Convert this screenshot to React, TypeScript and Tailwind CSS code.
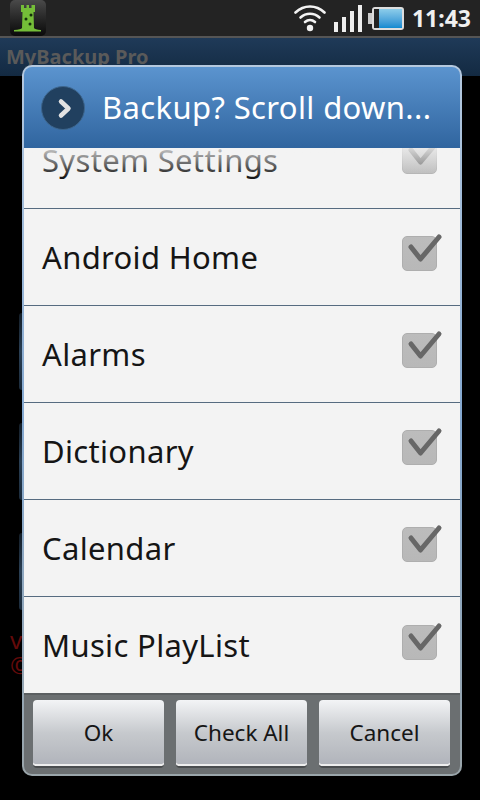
const items = ["System Settings", "Android Home", "Alarms", "Dictionary", "Calendar", "Music PlayList"];

function Check() {
  return (
    <div className="relative -mt-[7px] w-[35px] h-[35px] rounded-[5px] border border-[#aeaeae] bg-gradient-to-b from-[#bcbcbc] to-[#b8b8b8]">
      <svg className="absolute -left-[1px] -top-[4px]" width="42" height="38" viewBox="0 0 42 38">
        <path d="M9 14 L18.5 26 L37 4" fill="none" stroke="#676767" strokeWidth="5" strokeLinecap="round" strokeLinejoin="round" />
      </svg>
    </div>
  );
}

function Btn({ label }: { label: string }) {
  return (
    <button className="w-[131px] h-[68px] rounded-[4px] border-b-2 border-b-[#4a4d4f] bg-gradient-to-b from-[#f3f4f6] via-[#c6c9cd] to-[#b0b3ba] shadow-[inset_0_-2px_0_#eeeeee] text-[22.5px] text-[#161616] flex items-center justify-center">
      {label}
    </button>
  );
}

function Strip({ top }: { top: string }) {
  return <div className={`absolute left-[19px] w-[3px] h-[77px] rounded-l-[3px] bg-gradient-to-b from-[#141e28] via-[#2a3f54] to-[#1c2c3c] ${top}`} />;
}

export default function App() {
  return (
    <div className="relative w-[480px] h-[800px] overflow-hidden bg-black [font-family:'Noto_Sans',sans-serif]">
      <div className="h-[38px] bg-[#232323] border-b-2 border-b-[#555] flex items-center justify-between pl-[10px] pr-[9px]">
        <div className="w-[36px] h-[36px] rounded-[5px] bg-gradient-to-b from-[#4a4a4a] to-[#0a0a0a]">
          <svg width="36" height="36" viewBox="0 0 36 36">
            <path d="M11 5h3v3h2.5V5H19v3h2.5V5H25v7h-1.5l.5 16q1 1.5 7 2v1.5H4V30q7-.5 8-2l.5-16H11z" fill="#74bd38" />
            <circle cx="21" cy="15" r="1.5" fill="#15300a" />
            <circle cx="16" cy="19" r="1.5" fill="#15300a" />
            <circle cx="20" cy="24" r="1.5" fill="#15300a" />
          </svg>
        </div>
        <div className="flex items-center">
          <svg width="32" height="28" viewBox="0 0 32 28" className="mr-[8px]">
            <g fill="none" stroke="#f2f2f2" strokeWidth="2.6" strokeLinecap="round">
              <path d="M1.5 8.5 C10 0.5 22 0.5 30.5 8.5" />
              <path d="M6.5 13.5 C12 8.5 20 8.5 25.5 13.5" />
              <path d="M11 18 C14 15.5 18 15.5 21 18" />
            </g>
            <circle cx="16" cy="24" r="3.2" fill="#f2f2f2" />
          </svg>
          <div className="flex items-end gap-[4px] h-[27px] mr-[6px]">
            <div className="w-[4px] h-[10px] bg-[#eee]" />
            <div className="w-[4px] h-[15px] bg-[#eee]" />
            <div className="w-[4px] h-[21px] bg-[#eee]" />
            <div className="w-[4px] h-[27px] bg-[#eee]" />
          </div>
          <div className="w-[4px] h-[11px] bg-[#ccc]" />
          <div className="w-[32px] h-[23px] rounded-[3px] border-2 border-[#ddd] flex mr-[8px]">
            <div className="w-[5px] bg-[#222]" />
            <div className="flex-1 bg-gradient-to-b from-[#8ccdea] to-[#0a8ad0]" />
          </div>
          <span className="text-[23px] leading-none font-bold text-[#f0f0f0]">11:43</span>
        </div>
      </div>
      <div className="h-[38px] bg-gradient-to-b from-[#1f3a58] to-[#132a42] px-[6px] text-[20px] leading-[38px] font-bold text-[#5a5a5a]">MyBackup Pro</div>
      <Strip top="top-[313px]" />
      <Strip top="top-[423px]" />
      <Strip top="top-[533px]" />
      <div className="absolute left-[10px] top-[627px] text-[24px] leading-[25px] text-[#640a0a]">
        <div>v</div>
        <div>©</div>
      </div>

      <div className="absolute left-[22px] top-[65px] w-[440px] h-[711px] rounded-[10px] bg-gradient-to-b from-[#b5c9df] via-[#84a8d0] to-[#9aa5aa] p-[2px] flex flex-col overflow-hidden">
        <div className="h-[81px] shrink-0 rounded-t-[8px] bg-gradient-to-b from-[#5b94cf] to-[#30659f] flex items-center pl-[17px]">
          <div className="w-[44px] h-[44px] rounded-full bg-[#21405f] border border-[#3d658c] flex items-center justify-center">
            <svg width="22" height="24" viewBox="0 0 22 24">
              <path d="M9 5.5 L16.5 12.5 L9 19.5" fill="none" stroke="#e2e2e2" strokeWidth="4.5" strokeLinecap="round" strokeLinejoin="round" />
            </svg>
          </div>
          <span className="ml-[17px] text-[31px] tracking-[0.37px] leading-none text-white whitespace-nowrap">Backup? Scroll down...</span>
        </div>
        <div className="relative flex-1 min-h-0 bg-[#f3f3f3] overflow-hidden">
          <div className="-mt-[36px]">
            {items.map((t) => (
              <div key={t} className="h-[97px] border-b border-b-[#566b80] last:border-b-0 flex items-center justify-between pl-[18px] pr-[23px]">
                <span className="text-[31px] tracking-[0.33px] text-[#151515]">{t}</span>
                <Check />
              </div>
            ))}
          </div>
          <div className="absolute inset-x-0 top-0 h-[30px] bg-gradient-to-b from-[#f3f3f3cc] to-transparent" />
        </div>
        <div className="h-[81px] shrink-0 rounded-b-[8px] border-t-2 border-t-[#5b5f61] bg-[#6b6f71] flex items-start gap-[12px] pt-[5px] pl-[9px]">
          <Btn label="Ok" />
          <Btn label="Check All" />
          <Btn label="Cancel" />
        </div>
      </div>
    </div>
  );
}
